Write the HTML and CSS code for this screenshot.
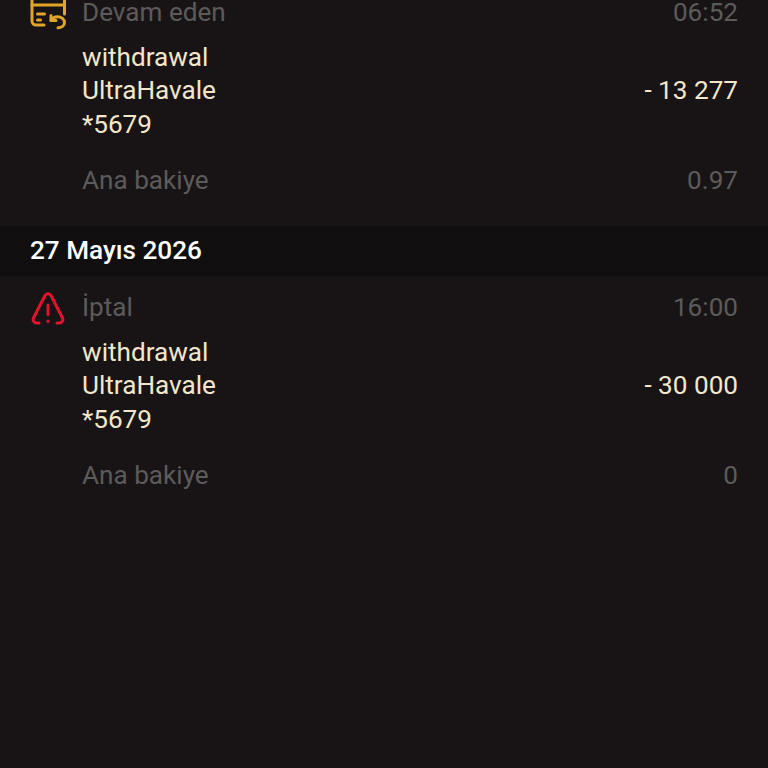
FILE: index.html
```html
<!DOCTYPE html>
<html lang="tr">
<head>
<meta charset="utf-8">
<title>İşlemler</title>
<link rel="stylesheet" href="styles.css">
</head>
<body>
<main class="list">
  <article class="tx">
    <svg class="icon" viewBox="0 0 36 36" fill="none" stroke="#e0a526" stroke-width="3" stroke-linecap="round" stroke-linejoin="round">
      <path d="M14 30H6a4 4 0 0 1-4-4V3a4 4 0 0 1 4-4h24.500a4 4 0 0 1 4 4v16"/>
      <path d="M2 10h32.500"/>
      <path d="M7.500 19h7M7.500 25h3"/>
      <path d="M21 25.500c1.500-2.500 4-3.700 6.500-3.700 3.700 0 7 2.500 7 5.700s-3 5.300-6.500 5.300"/>
      <path d="M21 20.500v5h5"/>
    </svg>
    <div class="body">
      <div class="line muted"><span>Devam eden</span><span>06:52</span></div>
      <div class="main">
        <div class="desc">withdrawal<br>UltraHavale<br>*5679</div>
        <div class="amount">- 13 277</div>
      </div>
      <div class="line muted balance"><span>Ana bakiye</span><span>0.97</span></div>
    </div>
  </article>
  <h2 class="date">27 Mayıs 2026</h2>
  <article class="tx">
    <svg class="icon" viewBox="0 0 36 36" fill="none" stroke="#e3122d" stroke-width="3" stroke-linecap="round" stroke-linejoin="round">
      <path d="M9 33H6.500c-2.700 0-4.200-2.700-3-5L15 5.500c1.300-2.500 4.700-2.500 6 0L32.500 28c1.200 2.300-.3 5-3 5H27"/>
      <path d="M18 15v9.500"/>
      <path d="M18 31v.3"/>
    </svg>
    <div class="body">
      <div class="line muted"><span>İptal</span><span>16:00</span></div>
      <div class="main">
        <div class="desc">withdrawal<br>UltraHavale<br>*5679</div>
        <div class="amount">- 30 000</div>
      </div>
      <div class="line muted balance"><span>Ana bakiye</span><span>0</span></div>
    </div>
  </article>
</main>
</body>
</html>
```
FILE: styles.css
```css
html, body {
  margin: 0;
  height: 100%;
  overflow: hidden;
  background: #181415;
}
body {
  font-family: Roboto, "Liberation Sans", sans-serif;
  font-size: 26.130px;
}
.list {
  margin-top: -19px;
}
.tx {
  display: flex;
  gap: 16px;
  padding: 14px 30px 29.500px;
}
.icon {
  flex: none;
  width: 36px;
  height: 36px;
  overflow: visible;
}
.body {
  flex: 1;
}
.line {
  display: flex;
  justify-content: space-between;
  line-height: 34px;
}
.muted {
  color: #5c5a5b;
}
.main {
  display: flex;
  justify-content: space-between;
  align-items: center;
  margin-top: 11.500px;
  color: #f2e6cc;
  line-height: 33.500px;
}
.balance {
  margin-top: 21.500px;
}
.date {
  margin: 0;
  height: 50px;
  padding: 0 30px;
  background: #100e0f;
  color: #fff;
  font-size: 26.130px;
  font-weight: 500;
  line-height: 48px;
}
```
